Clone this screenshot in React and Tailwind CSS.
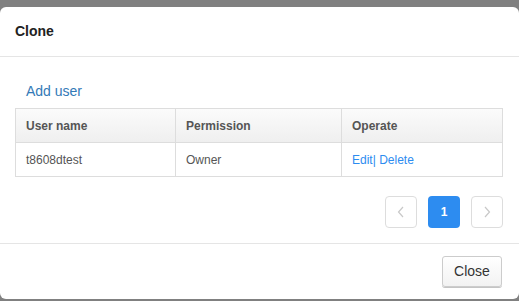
import React from "react";

const rows = [{ name: "t8608dtest", permission: "Owner" }];

function Chevron({ dir }) {
    return (
        <svg width="8" height="12" viewBox="0 0 8 12" fill="none">
            {dir === "left" ? (
                <polyline points="6,1 1.5,6 6,11" stroke="#c8c8c8" strokeWidth="1.2" />
            ) : (
                <polyline points="2,1 6.5,6 2,11" stroke="#c8c8c8" strokeWidth="1.2" />
            )}
        </svg>
    );
}

export default function App() {
    return (
        <div
            className="w-[519px] h-[301px] bg-[#808080] pt-[7px] overflow-hidden"
            style={{ fontFamily: '"Liberation Sans", Arial, sans-serif' }}
        >
            <div className="bg-white rounded-[6px] h-[292px] flex flex-col">
                {/* Header */}
                <div className="h-[50px] pl-[15px] flex items-center border-b border-[#e5e5e5] text-[14px] font-bold text-[#222]">
                    Clone
                </div>

                {/* Body */}
                <div className="pl-[15px] pr-[16px] pt-[24px]">
                    <div className="pl-[11px] h-[20px] leading-[20px] text-[14px] text-[#337ab7] mb-[7px]">
                        Add user
                    </div>

                    <div className="border-l border-t border-[#dddddd] grid grid-cols-[160px_166px_161px] text-[12px]">
                        {["User name", "Permission", "Operate"].map((h) => (
                            <div
                                key={h}
                                className="h-[34px] pl-[10px] flex items-center border-r border-b border-[#dddddd] bg-gradient-to-b from-[#fbfbfb] to-[#efefef] font-bold text-[#555]"
                            >
                                {h}
                            </div>
                        ))}
                        {rows.map((r) => (
                            <React.Fragment key={r.name}>
                                <div className="h-[34px] pl-[10px] flex items-center border-r border-b border-[#dddddd] text-[#555]">
                                    {r.name}
                                </div>
                                <div className="h-[34px] pl-[10px] flex items-center border-r border-b border-[#dddddd] text-[#555]">
                                    {r.permission}
                                </div>
                                <div className="h-[34px] pl-[10px] flex items-center border-r border-b border-[#dddddd] text-[#2d8cf0]">
                                    Edit| Delete
                                </div>
                            </React.Fragment>
                        ))}
                    </div>

                    {/* Pagination */}
                    <div className="flex justify-end gap-[11px] mt-[19px] mb-[15px]">
                        <div className="w-[32px] h-[32px] border border-[#dddddd] rounded-[4px] flex items-center justify-center">
                            <Chevron dir="left" />
                        </div>
                        <div className="w-[32px] h-[32px] bg-[#2d8cf0] rounded-[4px] flex items-center justify-center text-white text-[12px] font-bold">
                            1
                        </div>
                        <div className="w-[32px] h-[32px] border border-[#dddddd] rounded-[4px] flex items-center justify-center">
                            <Chevron dir="right" />
                        </div>
                    </div>
                </div>

                {/* Footer */}
                <div className="flex-1 border-t border-[#e5e5e5] flex justify-end items-start pt-[12px] pr-[17px]">
                    <button className="w-[60px] h-[31px] border border-[#cccccc] rounded-[3px] bg-gradient-to-b from-white to-[#f2f2f2] text-[14px] text-[#333] shadow-[0_1px_0_#c4c4c4]">
                        Close
                    </button>
                </div>
            </div>
        </div>
    );
}
